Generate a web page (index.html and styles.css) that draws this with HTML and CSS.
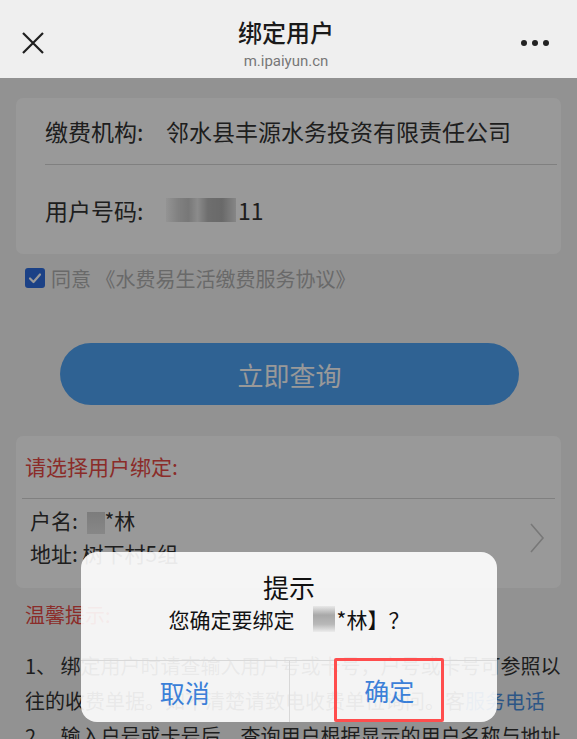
FILE: index.html
```html
<!DOCTYPE html>
<html lang="zh-CN">
<head>
    <meta charset="UTF-8">
    <meta name="viewport" content="width=device-width, initial-scale=1.0">
    <title>绑定用户</title>
    <link rel="stylesheet" href="styles.css">
</head>
<body>
<div class="screen">
    <header class="nav">
        <svg class="nav-close" width="24" height="24" viewBox="0 0 24 24">
            <path d="M2 2 L22 22 M22 2 L2 22" stroke="#1f1f1f" stroke-width="2.2" fill="none"/>
        </svg>
        <div class="nav-title">
            <div class="nav-name">绑定用户</div>
            <div class="nav-url">m.ipaiyun.cn</div>
        </div>
        <div class="nav-more"><span></span><span></span><span></span></div>
    </header>

    <main class="page">
        <section class="card form-card">
            <div class="form-row first">
                <span class="form-label">缴费机构:</span>
                <span class="form-value">邻水县丰源水务投资有限责任公司</span>
            </div>
            <div class="form-row second">
                <span class="form-label">用户号码:</span>
                <span class="form-value"><span class="blur blur-id"></span>11</span>
            </div>
        </section>

        <div class="agree">
            <span class="checkbox">
                <svg width="14" height="14" viewBox="0 0 14 14"><path d="M2 7.5 L5.5 11 L12 3.5" stroke="#fff" stroke-width="2.2" fill="none" stroke-linecap="round" stroke-linejoin="round"/></svg>
            </span>
            <span class="agree-text">同意 《水费易生活缴费服务协议》</span>
        </div>

        <button class="query-btn">立即查询</button>

        <section class="card user-card">
            <div class="user-head">请选择用户绑定:</div>
            <div class="user-row">
                <div class="user-info">
                    <div>户名: <span class="blur blur-name"></span>*林</div>
                    <div>地址: 树下村5组</div>
                </div>
                <svg class="chevron" width="16" height="32" viewBox="0 0 16 32">
                    <path d="M2 2 L14 16 L2 30" stroke="#c8c8c8" stroke-width="1.6" fill="none"/>
                </svg>
            </div>
        </section>

        <section class="tips">
            <div class="tips-head">温馨提示:</div>
            <p class="tip-line">1、 绑定用户时请查输入用户号或卡号，户号或卡号可参照以</p>
            <p class="tip-line">往的收费单据。如不清楚请致电收费单位询问。客<span class="link">服务电话</span></p>
            <p class="tip-line">2、 输入户号或卡号后，查询用户根据显示的用户名称与地址</p>
        </section>
    </main>

    <div class="mask"></div>

    <div class="dialog">
        <div class="dialog-body">
            <div class="dialog-title">提示</div>
            <div class="dialog-msg"><span>您确定要绑定</span><span class="blur blur-msg"></span><span>*林】？</span></div>
        </div>
        <div class="dialog-actions">
            <div class="dialog-btn">取消</div>
            <div class="dialog-btn"><span class="mark">确定</span></div>
        </div>
    </div>
</div>
</body>
</html>
```

FILE: styles.css
```css
body {
    margin: 0;
    font-family: "Noto Sans CJK SC", "Noto Sans", sans-serif;
    color: #333;
}

.screen {
    position: relative;
    width: 577px;
    height: 739px;
    overflow: hidden;
    background-color: #f4f4f4;
}

/* top bar */
.nav {
    height: 78px;
    background-color: #efefef;
    display: flex;
    align-items: center;
    padding: 0 28px 0 21px;
    box-sizing: border-box;
}

.nav-close {
    margin-top: 8px;
}

.nav-title {
    flex: 1;
    text-align: center;
    padding-left: 6px;
}

.nav-name {
    font-size: 24px;
    font-weight: 500;
    color: #1a1a1a;
    line-height: 30px;
    margin-top: 10px;
}

.nav-url {
    font-family: "Roboto", "Noto Sans", sans-serif;
    font-size: 15px;
    color: #777;
    line-height: 20px;
    margin-top: 4px;
}

.nav-more {
    display: flex;
    gap: 5px;
    margin-top: 8px;
}

.nav-more span {
    width: 6px;
    height: 6px;
    border-radius: 50%;
    background-color: #222;
}

/* page */
.page {
    padding-top: 20px;
}

.card {
    margin: 0 16px;
    background-color: #fff;
    border-radius: 7px;
}

.form-card {
    padding-left: 29px;
    padding-right: 4px;
}

.form-row {
    display: flex;
    align-items: center;
    font-size: 23px;
    color: #333;
}

.form-row.first {
    height: 66px;
    border-bottom: 1px solid #d6d6d6;
}

.form-row.second {
    height: 89px;
}

.form-label {
    width: 121px;
}

.form-value {
    display: flex;
    align-items: center;
}

.blur {
    display: inline-block;
    vertical-align: middle;
}

.blur-id {
    width: 70px;
    height: 24px;
    margin-right: 2px;
    background: linear-gradient(90deg, #f6f6f6 0, #d6d6d6 18%, #c8c8c8 32%, #e8e8e8 45%, #b8b8b8 60%, #b0b0b0 80%, #e0e0e0 100%);
}

.blur-name {
    width: 18px;
    height: 22px;
    margin-left: 4px;
    background: linear-gradient(180deg, #cfcfcf, #e2e2e2);
}

.blur-msg {
    width: 22px;
    height: 26px;
    margin: 0 2px 0 18px;
    background: linear-gradient(180deg, #e8e8e8 0, #a8a8a8 35%, #b8b8b8 70%, #ececec 100%);
}

.agree {
    display: flex;
    align-items: center;
    margin: 12px 0 0 25px;
    height: 24px;
}

.checkbox {
    width: 20px;
    height: 20px;
    border-radius: 3px;
    background-color: #2e6de0;
    display: flex;
    align-items: center;
    justify-content: center;
    margin-right: 6px;
}

.agree-text {
    font-size: 20px;
    color: #b0b0b0;
}

.query-btn {
    display: block;
    width: 459px;
    height: 62px;
    margin: 53px 0 0 60px;
    border: none;
    border-radius: 31px;
    background-color: #4fa3f5;
    color: #fff;
    font-family: inherit;
    font-size: 26px;
}

.user-card {
    margin-top: 31px;
    padding: 0 6px;
}

.user-head {
    height: 62px;
    line-height: 60px;
    padding-left: 3px;
    font-size: 21px;
    color: #e84a45;
    border-bottom: 1px solid #d6d6d6;
}

.user-row {
    display: flex;
    align-items: center;
    padding: 5px 10px 18px 8px;
}

.user-info {
    flex: 1;
    font-size: 21px;
    line-height: 33px;
    color: #333;
}

.chevron {
    margin-top: 2px;
}

.tips {
    padding: 12px 0 0 25px;
}

.tips-head {
    font-size: 20px;
    color: #e84a45;
    line-height: 30px;
    margin-bottom: 18px;
}

.tip-line {
    margin: 0;
    font-size: 20px;
    line-height: 35px;
    color: #333;
    white-space: nowrap;
}

.link {
    color: #4a8fe0;
}

/* alert overlay */
.mask {
    position: absolute;
    left: 0;
    right: 0;
    top: 78px;
    bottom: 0;
    background-color: rgba(0, 0, 0, 0.4);
}

.dialog {
    position: absolute;
    left: 81px;
    top: 552px;
    width: 416px;
    height: 170px;
    border-radius: 16px;
    background-color: rgba(255, 255, 255, 0.9);
    overflow: hidden;
    display: flex;
    flex-direction: column;
}

.dialog-body {
    height: 110px;
    text-align: center;
    border-bottom: 1px solid #d8d8d8;
}

.dialog-title {
    font-size: 26px;
    color: #111;
    line-height: 34px;
    margin-top: 18px;
}

.dialog-msg {
    font-size: 21px;
    color: #111;
    line-height: 30px;
    display: flex;
    justify-content: center;
    align-items: center;
}

.dialog-actions {
    flex: 1;
    display: flex;
}

.dialog-btn {
    flex: 1;
    display: flex;
    align-items: center;
    justify-content: center;
    font-size: 25px;
    color: #3b80d8;
}

.dialog-btn + .dialog-btn {
    border-left: 1px solid #d8d8d8;
}

.mark {
    display: flex;
    align-items: center;
    justify-content: center;
    width: 104px;
    height: 58px;
    margin-top: -3px;
    margin-left: -8px;
    border: 3px solid #ff4d4d;
    border-radius: 2px;
}
```
